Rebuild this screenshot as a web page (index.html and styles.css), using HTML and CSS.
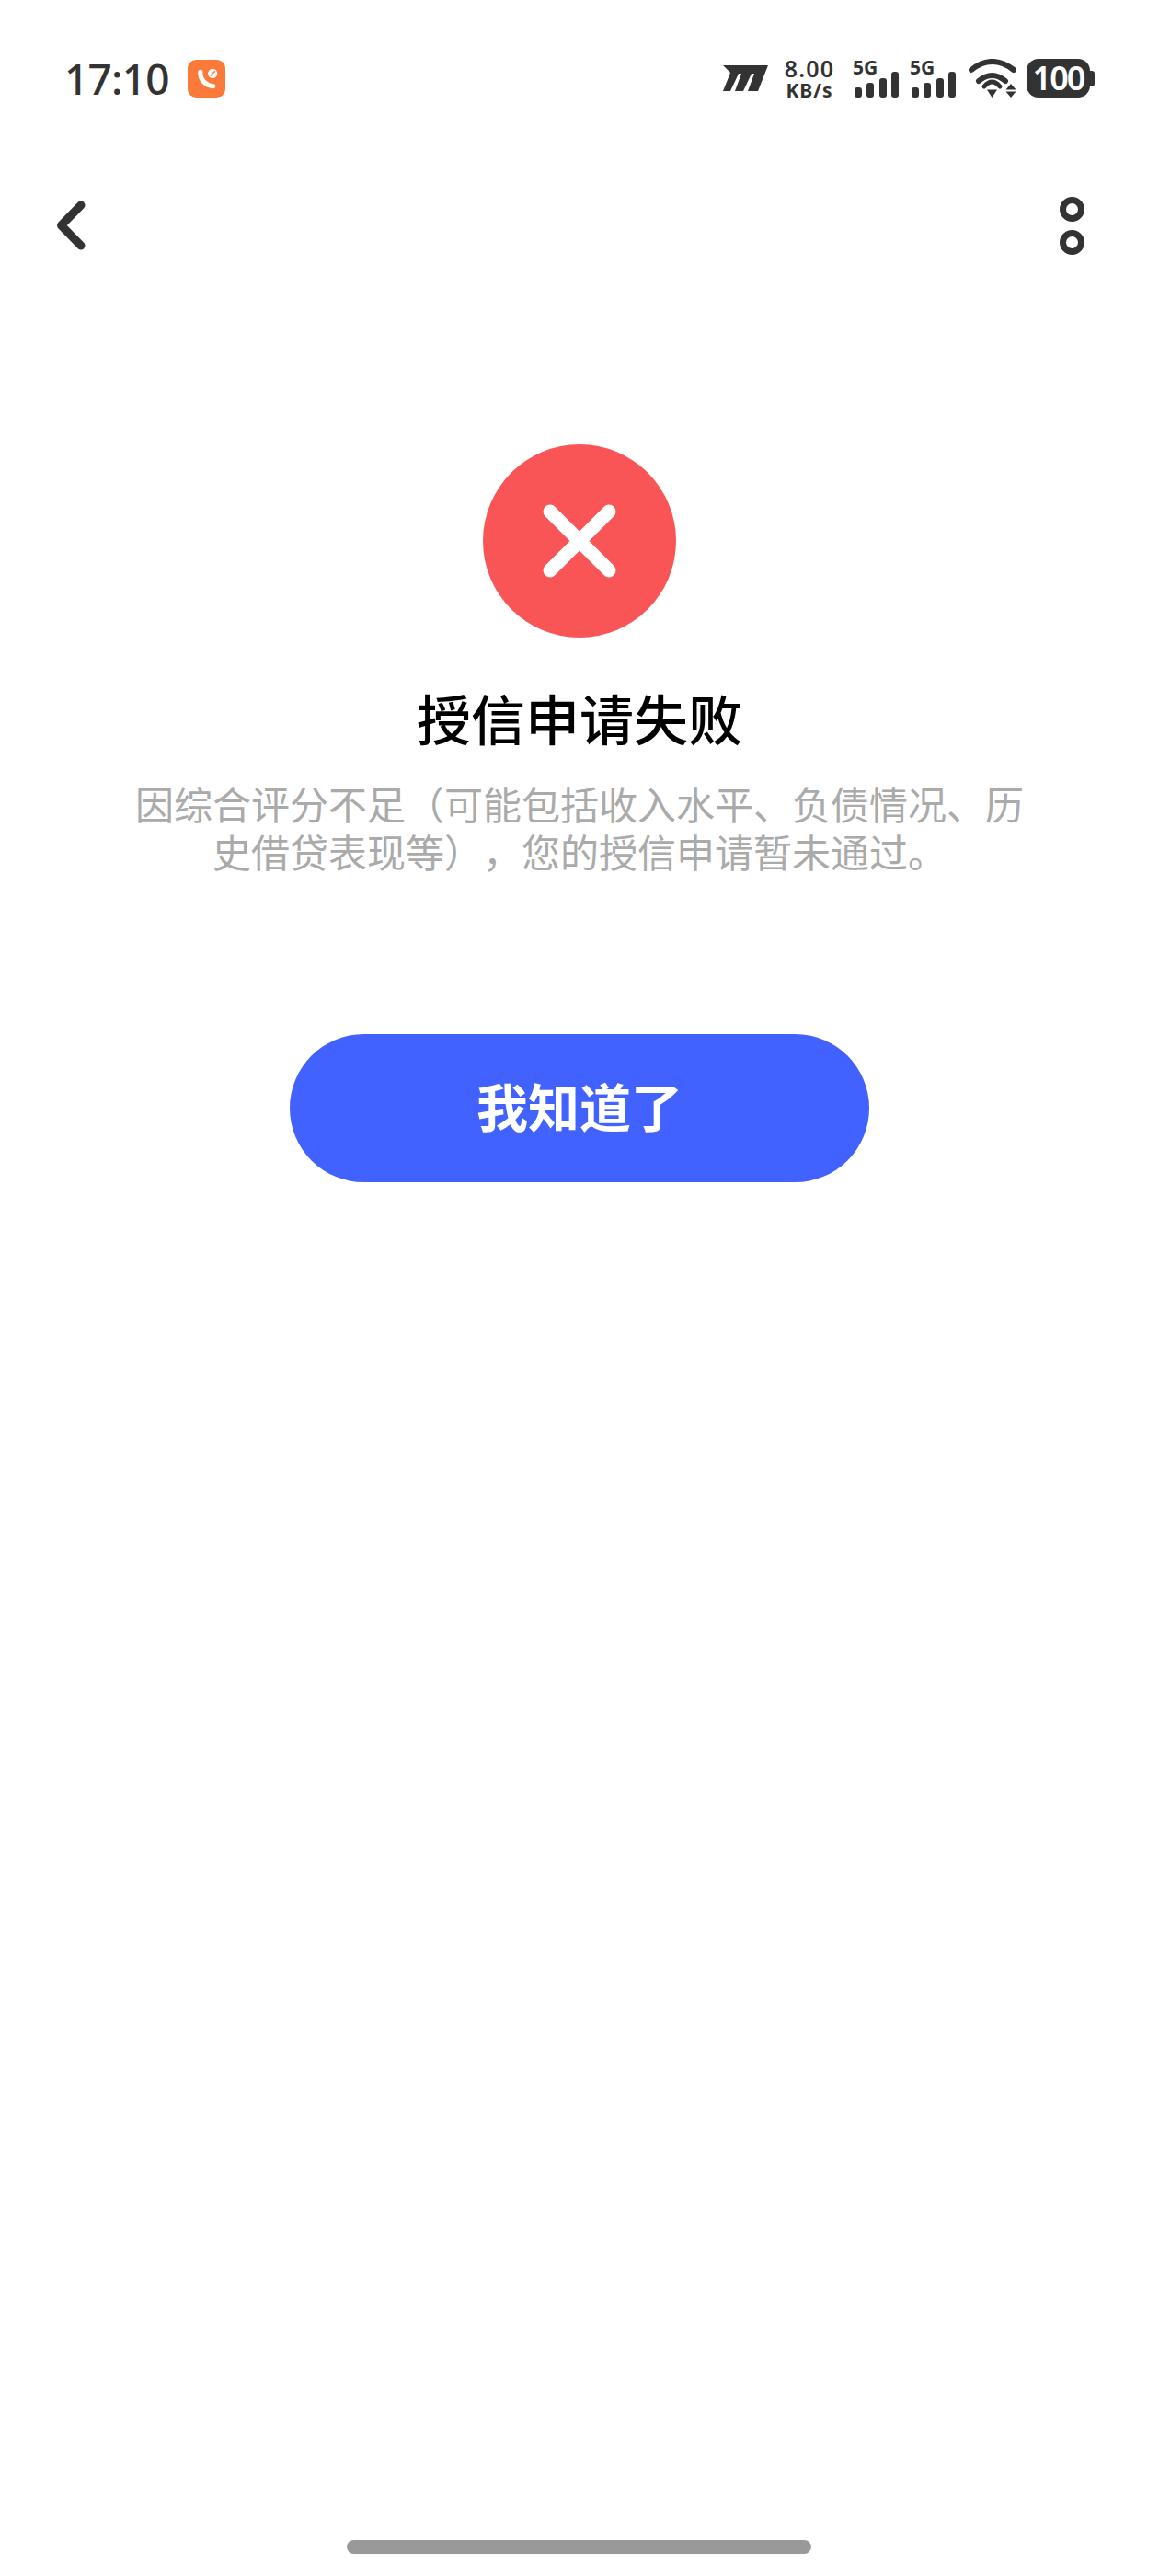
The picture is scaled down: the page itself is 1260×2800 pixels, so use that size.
FILE: index.html
```html
<!DOCTYPE html>
<html lang="zh-CN">
<head>
<meta charset="utf-8">
<title>授信申请失败</title>
<link rel="stylesheet" href="styles.css">
</head>
<body>
<div class="page">
  <header class="status">
    <div class="status-left">
      <span class="time">17:10</span>
      <svg class="app-badge" viewBox="0 0 40 40"><rect width="40" height="40" rx="9" fill="#fb7a3a"/><path d="M13.500 13C13 21 19 27 27 28" fill="none" stroke="#fff" stroke-width="5" stroke-linecap="round"/><circle cx="26.500" cy="14.500" r="5" fill="#fff"/><path d="M24 17l5-5" stroke="#fb7a3a" stroke-width="1.500"/></svg>
    </div>
    <div class="status-right">
      <svg class="carrier" viewBox="0 0 49 28"><path d="M0 0H49L38 28H27L34 9H31L22 28H13L20 9H17L8 28H0L8 8Z" fill="#333"/></svg>
      <div class="speed"><span class="speed-num">8.00</span><span class="speed-unit">KB/s</span></div>
      <div class="signal signal-first"><span class="sig-label">5G</span><svg class="sig-bars" viewBox="0 0 48 28"><rect x="0" y="17" width="8" height="11" rx="3"/><rect x="13" y="12" width="8" height="16" rx="3"/><rect x="27" y="7" width="8" height="21" rx="3"/><rect x="40" y="0" width="8" height="28" rx="3"/></svg></div>
      <div class="signal signal-second"><span class="sig-label">5G</span><svg class="sig-bars" viewBox="0 0 48 28"><rect x="0" y="17" width="8" height="11" rx="3"/><rect x="13" y="12" width="8" height="16" rx="3"/><rect x="27" y="7" width="8" height="21" rx="3"/><rect x="40" y="0" width="8" height="28" rx="3"/></svg></div>
      <svg class="wifi" viewBox="0 0 52 42"><g fill="none" stroke="#333" stroke-linecap="round"><path d="M3 12Q25.500 -6 49 12" stroke-width="6"/><path d="M11 24Q25.500 12 40 24" stroke-width="6"/><path d="M17 30Q25.500 20 34 30" stroke-width="5"/></g><path d="M20 33.500H31L25.500 42Z" fill="#333"/><path d="M40.500 33.500L46 27L51.500 33.500Z" fill="#333"/><path d="M40.500 35.500L46 42L51.500 35.500Z" fill="#333"/></svg>
      <div class="battery"><span class="battery-body">100</span><span class="battery-cap"></span></div>
    </div>
  </header>
  <nav class="nav">
    <svg class="back" viewBox="0 0 36 54"><path d="M28 5L6.500 27L28 49" fill="none" stroke="#333" stroke-width="9" stroke-linecap="round" stroke-linejoin="round"/></svg>
    <div class="more"><span class="ring"></span><span class="ring"></span></div>
  </nav>
  <main class="result">
    <svg class="fail-icon" viewBox="0 0 210 210"><circle cx="105" cy="105" r="105" fill="#f95557"/><path d="M73 73l64 64M137 73l-64 64" stroke="#fff" stroke-width="15" stroke-linecap="round"/></svg>
    <h1 class="title">授信申请失败</h1>
    <p class="desc">因综合评分不足（可能包括收入水平、负债情况、历史借贷表现等），您的授信申请暂未通过。</p>
    <button class="confirm">我知道了</button>
  </main>
  <div class="home-bar"></div>
</div>
</body>
</html>
```
FILE: styles.css
```css
* { box-sizing: border-box; }
html, body { margin: 0; padding: 0; background: #fff; }
body { font-family: "Noto Sans CJK SC", "Noto Sans", sans-serif; }
.page { position: relative; width: 1260px; height: 2800px; overflow: hidden; background: #fff; }

.status { height: 190px; padding: 64px 70px 0 70px; display: flex; justify-content: space-between; align-items: flex-start; }
.status-left { display: flex; align-items: center; gap: 20px; height: 42px; }
.time { font-family: "Noto Sans", sans-serif; font-size: 46px; font-weight: 500; line-height: 42px; letter-spacing: -0.8px; color: #333; }
.app-badge { width: 41px; height: 41px; display: block; }
.status-right { display: flex; align-items: flex-start; height: 42px; color: #333; }
.carrier { width: 49px; height: 28px; display: block; margin-top: 7px; margin-right: 1px; }
.speed { display: flex; flex-direction: column; align-items: center; gap: 4px; margin-left: 16px; width: 56px; font-family: "Noto Sans", sans-serif; font-weight: 600; color: #333; }
.speed-num { font-size: 25px; line-height: 20px; letter-spacing: 1.2px; }
.speed-unit { font-size: 21px; font-weight: 700; line-height: 20px; letter-spacing: 1px; }
.signal { position: relative; width: 48px; height: 42px; }
.signal-first { margin-left: 21px; }
.signal-second { margin-left: 14px; }
.sig-label { position: absolute; left: -2px; top: -1px; font-family: "Noto Sans", sans-serif; font-size: 21px; font-weight: 700; line-height: 20px; color: #333; }
.sig-bars { position: absolute; right: 0; bottom: 0; width: 48px; height: 28px; fill: #333; }
.wifi { width: 52px; height: 42px; display: block; margin-left: 14px; }
.battery { display: flex; align-items: center; margin-left: 11px; }
.battery-body { width: 69px; height: 42px; border-radius: 13px; background: #333; color: #fff; font-family: "Noto Sans", sans-serif; font-size: 36px; font-weight: 600; line-height: 41px; letter-spacing: -2px; text-align: center; }
.battery-cap { width: 5px; height: 17px; background: #333; border-radius: 0 3px 3px 0; }

.nav { height: 110px; padding: 0 81px 0 60px; display: flex; justify-content: space-between; align-items: center; }
.back { width: 36px; height: 54px; display: block; }
.more { display: flex; flex-direction: column; gap: 9px; }
.ring { display: block; width: 27px; height: 27px; border: 7.5px solid #333; border-radius: 50%; }

.result { display: flex; flex-direction: column; align-items: center; padding-top: 183px; }
.fail-icon { width: 210px; height: 210px; display: block; }
.title { margin: 44px 0 0; font-size: 59px; font-weight: 500; line-height: 86px; color: #000; }
.desc { margin: 24px 0 0; width: 980px; font-size: 42px; font-weight: 400; line-height: 52px; color: #aaa; text-align: center; text-spacing-trim: space-all; text-autospace: no-autospace; }
.confirm { margin-top: 173px; width: 630px; height: 161px; padding: 0 0 8px; border: 0; border-radius: 80.5px; background: #4162ff; color: #fff; font-family: inherit; font-size: 56px; font-weight: 700; }

.home-bar { position: absolute; left: 377px; top: 2761px; width: 505px; height: 15px; border-radius: 7.5px; background: #999; }
```
